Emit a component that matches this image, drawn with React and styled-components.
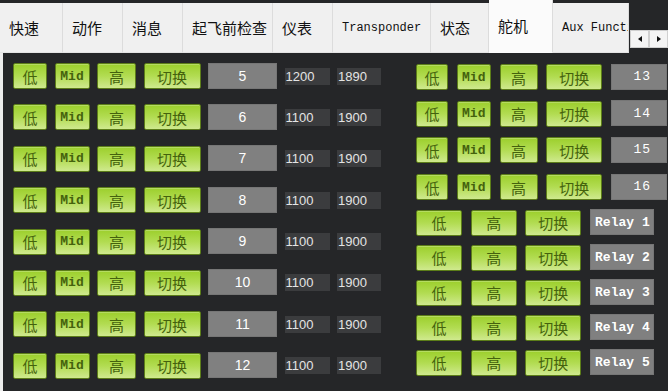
import React from 'react';
import styled, { createGlobalStyle } from 'styled-components';

const GlobalStyle = createGlobalStyle`
  html, body {
    margin: 0;
    padding: 0;
    background: #252628;
  }
  * {
    box-sizing: border-box;
  }
`;

const Window = styled.div`
  width: 668px;
  height: 391px;
  background: #252628;
  display: flex;
  flex-direction: column;
  overflow: hidden;
`;

const TabStrip = styled.div`
  height: 53px;
  display: flex;
  align-items: flex-end;
  flex-shrink: 0;
`;

const Tab = styled.div`
  width: ${(p) => p.$w}px;
  height: ${(p) => (p.$active ? 53 : 50)}px;
  flex-shrink: 0;
  display: flex;
  align-items: center;
  padding-left: 9px;
  padding-bottom: ${(p) => (p.$active ? 2 : 0)}px;
  background: ${(p) => (p.$active ? '#fbfbfb' : '#f0f0f0')};
  border-right: 1px solid #dcdcdc;
  border-bottom: 1px solid ${(p) => (p.$active ? '#fbfbfb' : '#e4e4e4')};
  color: #111;
  font-family: ${(p) => (p.$latin ? '"Liberation Mono", monospace' : '"Noto Sans CJK SC", sans-serif')};
  font-size: ${(p) => (p.$latin ? 12 : 15)}px;
  white-space: nowrap;
  overflow: hidden;
`;

const ArrowGroup = styled.div`
  display: flex;
  align-self: flex-start;
  margin-top: 30px;
  margin-left: 1px;
  background: #252628;
  padding-bottom: 3px;
`;

const ArrowButton = styled.div`
  width: 19px;
  height: 18px;
  background: #f4f4f4;
  border: 1px solid #d0d0d0;
  display: flex;
  align-items: center;
  justify-content: center;
  &::after {
    content: '';
    border-top: 3.5px solid transparent;
    border-bottom: 3.5px solid transparent;
    ${(p) => (p.$dir === 'left' ? 'border-right: 4px solid #111;' : 'border-left: 4px solid #111;')}
  }
`;

const Page = styled.div`
  flex: 1;
  display: flex;
  border-left: 3px solid #ededed;
  padding: 10px 0 0 10px;
  gap: 35px;
`;

const LeftColumn = styled.div`
  display: grid;
  grid-template-columns: 34px 35px 39px 57px 69px 45px 44px;
  grid-auto-rows: 26px;
  column-gap: 7.5px;
  row-gap: 15.4px;
  align-items: center;
  align-content: start;
`;

const RightColumn = styled.div`
  display: flex;
  flex-direction: column;
  margin-top: 1px;
  gap: 9.5px;
`;

const ServoGrid = styled.div`
  display: grid;
  grid-template-columns: 32px 34px 38px 56px 56px;
  grid-auto-rows: 26px;
  column-gap: 8.75px;
  row-gap: 10.7px;
  align-items: center;
`;

const RelayGrid = styled.div`
  display: grid;
  grid-template-columns: 46px 46px 56px 64px;
  grid-auto-rows: 26px;
  column-gap: 8.7px;
  row-gap: 9px;
  align-items: center;
`;

const GreenButton = styled.div`
  height: 26px;
  display: flex;
  align-items: center;
  justify-content: center;
  border: 1px solid #5c7d18;
  border-radius: 2px;
  background: linear-gradient(180deg, #9ccf2c 0%, #b2dc52 50%, #cfe98e 100%);
  box-shadow: inset 0 1px 0 rgba(255, 255, 255, 0.25);
  color: #44620d;
  font-family: ${(p) => (p.$mono ? '"Liberation Mono", monospace' : '"Noto Sans CJK SC", sans-serif')};
  font-size: ${(p) => (p.$mono ? 13 : 15)}px;
  font-weight: ${(p) => (p.$mono ? 700 : 400)};
  line-height: 1;
`;

const ChannelBox = styled.div`
  height: 26px;
  display: flex;
  align-items: center;
  justify-content: ${(p) => (p.$right ? 'flex-end' : p.$bold ? 'flex-start' : 'center')};
  padding-right: ${(p) => (p.$right ? 15 : 0)}px;
  padding-left: ${(p) => (p.$bold ? 4 : 0)}px;
  margin-top: -1px;
  background: #808080;
  border: 1px solid #767676;
  color: #fff;
  font-family: ${(p) => (p.$mono ? '"Liberation Mono", monospace' : '"Liberation Sans", sans-serif')};
  font-size: ${(p) => (p.$mono ? 13 : 14)}px;
  font-weight: ${(p) => (p.$bold ? 700 : 400)};
  letter-spacing: ${(p) => (p.$right ? 1 : 0)}px;
  white-space: nowrap;
`;

const ValueBox = styled.div`
  height: 17px;
  display: flex;
  align-items: center;
  padding-left: 1px;
  background: #3b3c3e;
  color: #e4e4e4;
  font-family: 'Liberation Sans', sans-serif;
  font-size: 13px;
`;

const tabs = [
  { label: '快速', w: 63 },
  { label: '动作', w: 60 },
  { label: '消息', w: 60 },
  { label: '起飞前检查', w: 90 },
  { label: '仪表', w: 60 },
  { label: 'Transponder', w: 98, latin: true },
  { label: '状态', w: 58 },
  { label: '舵机', w: 64, active: true },
  { label: 'Aux Functions', w: 76, latin: true },
];

const leftRows = [
  { ch: 5, min: 1200, max: 1890 },
  { ch: 6, min: 1100, max: 1900 },
  { ch: 7, min: 1100, max: 1900 },
  { ch: 8, min: 1100, max: 1900 },
  { ch: 9, min: 1100, max: 1900 },
  { ch: 10, min: 1100, max: 1900 },
  { ch: 11, min: 1100, max: 1900 },
  { ch: 12, min: 1100, max: 1900 },
];

const App = () => (
  <>
    <GlobalStyle />
    <Window>
      <TabStrip>
        {tabs.map((t) => (
          <Tab key={t.label} $w={t.w} $active={t.active} $latin={t.latin}>
            {t.label}
          </Tab>
        ))}
        <ArrowGroup>
          <ArrowButton $dir="left" />
          <ArrowButton $dir="right" />
        </ArrowGroup>
      </TabStrip>
      <Page>
        <LeftColumn>
          {leftRows.map((r) => (
            <React.Fragment key={r.ch}>
              <GreenButton>低</GreenButton>
              <GreenButton $mono>Mid</GreenButton>
              <GreenButton>高</GreenButton>
              <GreenButton>切换</GreenButton>
              <ChannelBox>{r.ch}</ChannelBox>
              <ValueBox>{r.min}</ValueBox>
              <ValueBox>{r.max}</ValueBox>
            </React.Fragment>
          ))}
        </LeftColumn>
        <RightColumn>
          <ServoGrid>
            {[13, 14, 15, 16].map((ch) => (
              <React.Fragment key={ch}>
                <GreenButton>低</GreenButton>
                <GreenButton $mono>Mid</GreenButton>
                <GreenButton>高</GreenButton>
                <GreenButton>切换</GreenButton>
                <ChannelBox $right $mono>{ch}</ChannelBox>
              </React.Fragment>
            ))}
          </ServoGrid>
          <RelayGrid>
            {[1, 2, 3, 4, 5].map((n) => (
              <React.Fragment key={n}>
                <GreenButton>低</GreenButton>
                <GreenButton>高</GreenButton>
                <GreenButton>切换</GreenButton>
                <ChannelBox $mono $bold>Relay {n}</ChannelBox>
              </React.Fragment>
            ))}
          </RelayGrid>
        </RightColumn>
      </Page>
    </Window>
  </>
);

export default App;
